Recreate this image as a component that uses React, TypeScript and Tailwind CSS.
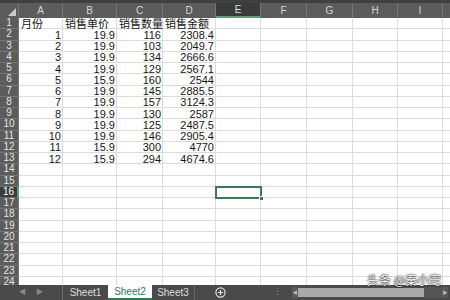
import { Fragment } from "react";

const font = "font-['Liberation_Sans','Noto_Sans_CJK_SC',sans-serif]";

const cols = ["A", "B", "C", "D", "E", "F", "G", "H", "I", ""];
const widths = [
  "w-[44px]",
  "w-[54px]",
  "w-[46px]",
  "w-[53px]",
  "w-[45px]",
  "w-[46px]",
  "w-[46px]",
  "w-[45px]",
  "w-[45px]",
  "w-[45px]",
];

const data: (string | number)[][] = [
  ["月份", "销售单价", "销售数量", "销售金额"],
  [1, 19.9, 116, 2308.4],
  [2, 19.9, 103, 2049.7],
  [3, 19.9, 134, 2666.6],
  [4, 19.9, 129, 2567.1],
  [5, 15.9, 160, 2544],
  [6, 19.9, 145, 2885.5],
  [7, 19.9, 157, 3124.3],
  [8, 19.9, 130, 2587],
  [9, 19.9, 125, 2487.5],
  [10, 19.9, 146, 2905.4],
  [11, 15.9, 300, 4770],
  [12, 15.9, 294, 4674.6],
];

const ROWS = 24;
const SEL_COL = 4;
const SEL_ROW = 16;

const Cell = ({ value, row, col }: { value?: string | number; row: number; col: number }) => {
  const isNum = typeof value === "number";
  const selected = row === SEL_ROW && col === SEL_COL;
  return (
    <div
      className={`${widths[col]} shrink-0 h-full relative border-r border-b border-[#dcdcdc] flex items-center overflow-visible whitespace-nowrap text-[11px] leading-none text-[#161616] ${
        isNum ? "justify-end pr-[1px]" : "justify-start pl-[2px]"
      }`}
    >
      {value !== undefined && <span className="translate-y-[0.5px]">{value}</span>}
      {selected && (
        <div className="absolute -left-[1px] -top-[1px] w-[47px] h-[13.25px] border-2 border-[#3b7a57] z-10">
          <div className="absolute -right-[4px] -bottom-[4px] w-[5px] h-[5px] bg-[#3b7a57] border border-white" />
        </div>
      )}
    </div>
  );
};

export default function App() {
  return (
    <div className={`w-[450px] h-[300px] overflow-hidden bg-white flex flex-col ${font}`}>
      {/* top strip */}
      <div className="h-[3px] shrink-0 bg-[#404040]" />

      {/* column headers */}
      <div className="h-[15px] shrink-0 flex bg-[#5c5c5c] overflow-hidden">
        <div className="w-[19px] shrink-0 h-full border-r border-[#767676] relative">
          <svg className="absolute right-[2px] bottom-[2px]" width="8" height="8" viewBox="0 0 8 8">
            <polygon points="8,0 8,8 0,8" fill="#c9c9c9" />
          </svg>
        </div>
        {cols.map((c, i) => (
          <div
            key={i}
            className={`${widths[i]} shrink-0 h-full flex items-center justify-center text-[10px] border-r border-[#767676] ${
              i === SEL_COL
                ? "bg-[#3b3b3b] text-[#cfe6d8] border-b-2 border-b-[#5f9f7a]"
                : "text-[#d6d6d6]"
            }`}
          >
            {c}
          </div>
        ))}
      </div>

      {/* rows */}
      <div className="flex-1 overflow-hidden">
        {Array.from({ length: ROWS }, (_, r) => {
          const row = r + 1;
          const vals = data[r] ?? [];
          return (
            <div key={row} className="h-[11.25px] flex">
              <div
                className={`w-[19px] shrink-0 h-full flex items-center justify-center text-[10px] leading-none border-b border-r ${
                  row === SEL_ROW
                    ? "bg-[#3b3b3b] text-white border-b-[#6a6a6a] border-r-2 border-r-[#5f9f7a]"
                    : "bg-[#5c5c5c] text-[#e4e4e4] border-b-[#767676] border-r-[#767676]"
                }`}
              >
                {row}
              </div>
              {cols.map((c, i) => (
                <Fragment key={i}>
                  <Cell value={vals[i]} row={row} col={i} />
                </Fragment>
              ))}
            </div>
          );
        })}
      </div>

      {/* sheet tab bar */}
      <div className="h-[15px] shrink-0 bg-[#4a4a4a] flex items-center relative text-[10px]">
        <div className="w-[63px] shrink-0 h-full flex items-center border-r border-[#6a6a6a]">
          <span className="ml-[19px] text-[7px] text-[#8a8a8a]">◀</span>
          <span className="ml-[10px] text-[7px] text-[#8a8a8a]">▶</span>
        </div>
        <div className="w-[45px] shrink-0 text-center text-[#dedede]">Sheet1</div>
        <div className="w-[44px] shrink-0 h-full bg-white text-[#2f7a52] flex items-center justify-center border-b-2 border-[#2f7a52]">
          Sheet2
        </div>
        <div className="w-[42px] shrink-0 text-center text-[#dedede]">Sheet3</div>
        <div className="h-full w-px shrink-0 bg-[#6a6a6a]" />
        <svg className="ml-[20px] shrink-0" width="11" height="11" viewBox="0 0 12 12">
          <circle cx="6" cy="6" r="5" fill="none" stroke="#e6e6e6" strokeWidth="1.3" />
          <path d="M6 3.3v5.4M3.3 6h5.4" stroke="#e6e6e6" strokeWidth="1.3" />
        </svg>
        <span className="ml-[47px] text-[#9a9a9a] text-[9px] shrink-0">⋮</span>
        <div className="ml-[10px] flex items-center h-[11px] shrink-0">
          <div className="w-[6px] h-full bg-[#5a5a5a] flex items-center justify-center text-[5px] text-[#bbb]">◀</div>
          <div className="w-[126px] h-[9px] bg-[#a9a9a9]" />
          <div className="w-[18px] h-full bg-[#555]" />
          <div className="w-[6px] h-full bg-[#5a5a5a] flex items-center justify-center text-[5px] text-[#bbb]">▶</div>
        </div>

        {/* watermark */}
        <div className="absolute right-[9px] -top-[11px] text-[12px] leading-none text-white [text-shadow:0_0_2px_#000,0_0_1px_#000] font-['Noto_Sans_CJK_SC',sans-serif]">
          头条 @秦小窍
        </div>
      </div>
    </div>
  );
}
